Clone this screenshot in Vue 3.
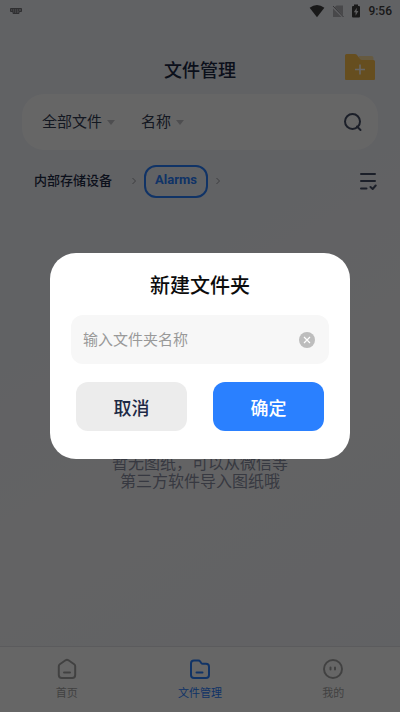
<script setup>
import { ref } from 'vue'

const folderName = ref('')
const tabs = [
  { id: 'home', label: '首页', active: false },
  { id: 'files', label: '文件管理', active: true },
  { id: 'me', label: '我的', active: false }
]
</script>

<template>
  <div class="app">
    <div class="status">
      <svg class="keyboard" width="14" height="8" viewBox="0 0 14 8" fill="none">
        <path d="M1.500 1.500h11v3H10v2H4v-2H1.500z" fill="#aaaab0" stroke="#77777c" />
        <path d="M3 3h8" stroke="#55555a" stroke-dasharray="1 1" />
        <path d="M5 5h4" stroke="#55555a" stroke-dasharray="1 1" />
      </svg>
      <div class="signals">
        <svg width="16" height="14" viewBox="0 0 16 14"><path d="M8 13.200L.6 3.800Q8-1.800 15.400 3.800z" fill="#404040" /></svg>
        <svg width="12" height="14" viewBox="0 0 12 14">
          <path d="M4.500 1.500H11v10L2.600 3.100z" fill="#b4b4b8" />
          <path d="M1 4.500L9.500 13H1z" fill="#b4b4b8" />
          <path d="M1 2L11.500 13" stroke="#858589" />
        </svg>
        <svg width="10" height="14" viewBox="0 0 10 14">
          <path d="M3 .5h4V2h1q1 0 1 1v9.500q0 1-1 1H2q-1 0-1-1V3q0-1 1-1h1z" fill="#404040" />
          <path d="M5.800 3.800L2.800 8.300H4.600V11.700L7.400 7H5.600z" fill="#e8e8ec" />
        </svg>
        <span class="clock">9:56</span>
      </div>
    </div>

    <header class="header">
      <h1>文件管理</h1>
      <button class="add" type="button" aria-label="新建文件夹">
        <svg width="32" height="28" viewBox="0 0 32 28">
          <path d="M15 3h12.500q2 0 2 2v6H12z" fill="#ffe2a0" />
          <path d="M2.500 1H11q1.200 0 2 1l3 4q.8 1 2 1h11.500q1.500 0 1.500 1.500V26q0 1-1 1H2q-1 0-1-1V2.500Q1 1 2.500 1z" fill="#ffc24f" />
          <path d="M16 11.500v10M11 16.500h10" stroke="#fff" stroke-width="1.600" />
        </svg>
      </button>
    </header>

    <section class="filters">
      <button type="button">全部文件<i class="caret"></i></button>
      <button type="button">名称<i class="caret"></i></button>
      <button class="search" type="button" aria-label="搜索">
        <svg width="20" height="20" viewBox="0 0 20 20" fill="none" stroke="#454e66" stroke-width="2">
          <circle cx="9.500" cy="9.500" r="7.500" />
          <path d="M14 14.500L17.500 18" stroke-linecap="round" />
        </svg>
      </button>
    </section>

    <nav class="crumbs" aria-label="路径">
      <a class="root" href="#root">内部存储设备</a>
      <svg class="arrow" width="6" height="8" viewBox="0 0 6 8"><path d="M1.500 1l3 3-3 3" /></svg>
      <a class="current" href="#alarms">Alarms</a>
      <svg class="arrow" width="6" height="8" viewBox="0 0 6 8"><path d="M1.500 1l3 3-3 3" /></svg>
      <button class="select" type="button" aria-label="多选">
        <svg width="18" height="18" viewBox="0 0 18 18" fill="none" stroke="#454e66" stroke-width="2" stroke-linecap="round">
          <path d="M2 2h14M2 9h14M2 16.500h5.500M11.500 15l2.200 2 3-3.500" />
        </svg>
      </button>
    </nav>

    <main class="empty">
      <p>暂无图纸，可以从微信等</p>
      <p>第三方软件导入图纸哦</p>
    </main>

    <nav class="tabs" aria-label="主导航">
      <a v-for="tab in tabs" :key="tab.id" :href="'#' + tab.id" :class="{ active: tab.active }">
        <svg width="22" height="22" viewBox="0 0 22 22" fill="none" stroke="currentColor" stroke-width="2" stroke-linecap="round" stroke-linejoin="round">
          <template v-if="tab.id === 'home'">
            <path d="M3.800 6.300L9.500 2.300q1.500-.9 3 0l5.700 4q1 .8 1 2V17q0 3-3 3H5.800q-3 0-3-3V8.300q0-1.200 1-2z" />
            <path d="M8 14.500h6" />
          </template>
          <template v-else-if="tab.id === 'files'">
            <path d="M5 2.500h4.300q1.200 0 1.900 1l1 1.500q.6.800 1.600.8h3.200q3 0 3 3V17q0 3-3 3H5q-3 0-3-3V5.500q0-3 3-3z" />
            <path d="M7.500 14.500h6" />
          </template>
          <template v-else>
            <circle cx="11" cy="11" r="9" />
            <path d="M8.500 9.500v2M13 9.500v2" />
          </template>
        </svg>
        <span>{{ tab.label }}</span>
      </a>
    </nav>

    <div class="overlay">
      <form class="dialog" role="dialog" aria-modal="true" aria-labelledby="dialog-title" @submit.prevent>
        <h2 id="dialog-title">新建文件夹</h2>
        <div class="field">
          <input v-model="folderName" type="text" placeholder="输入文件夹名称" aria-label="输入文件夹名称" />
          <button class="clear" type="button" aria-label="清空" @click="folderName = ''">
            <svg width="16" height="16" viewBox="0 0 16 16">
              <circle cx="8" cy="8" r="8" fill="#bdbdbd" />
              <path d="M5 5l6 6M11 5l-6 6" stroke="#fff" stroke-width="1.200" />
            </svg>
          </button>
        </div>
        <div class="actions">
          <button class="cancel" type="button">取消</button>
          <button class="confirm" type="submit">确定</button>
        </div>
      </form>
    </div>
  </div>
</template>

<style>
body {
  margin: 0;
}
</style>

<style scoped>
.app {
  display: flex;
  flex-direction: column;
  min-height: 100vh;
  background: linear-gradient(150deg, #f3f5fb, #f2f4fb 35%, #f8f8fa 60%, #f2f4fa);
  color: #1d2945;
  font-family: Roboto, "Noto Sans CJK SC", sans-serif;
}
h1, h2, p {
  margin: 0;
}
button {
  padding: 0;
  border: 0;
  background: none;
  color: inherit;
  font: inherit;
}
a {
  color: inherit;
  text-decoration: none;
}
svg {
  display: block;
}
.status {
  display: flex;
  align-items: center;
  justify-content: space-between;
  height: 22px;
  padding: 0 8px 0 9px;
}
.signals {
  display: flex;
  align-items: center;
  gap: 7px;
}
.clock {
  color: #404040;
  font-size: 12px;
  font-weight: 500;
}
.header {
  display: grid;
  grid-template-columns: 32px 1fr 32px;
  align-items: center;
  height: 46px;
  padding: 26px 24px 0;
}
.header h1 {
  grid-column: 2;
  font-size: 18px;
  font-weight: 500;
  line-height: 24px;
  text-align: center;
}
.add {
  margin-bottom: 8px;
}
.filters {
  display: flex;
  align-items: center;
  gap: 26px;
  height: 56px;
  margin: 0 22px;
  padding: 0 15px 0 20px;
  border-radius: 22px;
  background: #fff;
  color: #333c54;
  font-size: 15px;
  line-height: 20px;
  box-sizing: border-box;
}
.filters button {
  display: flex;
  align-items: center;
  gap: 5px;
}
.caret {
  border: 4px solid transparent;
  border-top: 5px solid #c4c4c8;
  border-bottom: 0;
}
.filters .search {
  margin-left: auto;
}
.crumbs {
  display: flex;
  align-items: center;
  height: 34px;
  margin: 14px 23px 0 22px;
  gap: 7px;
  font-size: 13px;
  font-weight: 500;
}
.root {
  padding: 0 12px 3px;
}
.current {
  padding: 0 9px 3px;
  border: 2px solid #2a80ff;
  border-radius: 12px;
  color: #2a80ff;
  font-weight: 700;
  line-height: 26px;
}
.arrow {
  fill: none;
  stroke: #9a9aa0;
}
.select {
  margin-left: auto;
}
.empty {
  flex: 1;
  padding-top: 257px;
  color: #8b8fa2;
  font-size: 16px;
  line-height: 18px;
  text-align: center;
}
.tabs {
  display: flex;
  height: 66px;
  border-top: 1px solid #e4e4e8;
  background: #fff;
  box-sizing: border-box;
}
.tabs a {
  display: flex;
  flex: 1;
  flex-direction: column;
  align-items: center;
  gap: 6px;
  padding-top: 11px;
  color: #a4a4a4;
  font-size: 11px;
  line-height: 16px;
}
.tabs .active {
  color: #2a80ff;
}
.overlay {
  position: fixed;
  inset: 0;
  display: flex;
  align-items: center;
  justify-content: center;
  background: rgba(0, 0, 0, 0.6);
}
.dialog {
  width: 75%;
  padding: 19px 21px 28px;
  border-radius: 26px;
  background: #fff;
  box-sizing: border-box;
}
.dialog h2 {
  color: #0c0c0c;
  font-size: 20px;
  font-weight: 500;
  line-height: 28px;
  text-align: center;
}
.field {
  display: flex;
  align-items: center;
  height: 49px;
  margin-top: 15px;
  padding: 0 14px 0 12px;
  border-radius: 12px;
  background: #f7f7f7;
}
.field input {
  flex: 1;
  min-width: 0;
  padding: 0;
  border: 0;
  outline: 0;
  background: none;
  color: #1d2945;
  font: inherit;
  font-size: 15px;
}
.field input::placeholder {
  color: #999;
  opacity: 1;
}
.actions {
  display: flex;
  gap: 26px;
  margin-top: 18px;
  padding: 0 5px;
}
.actions button {
  flex: 1;
  height: 49px;
  border-radius: 12px;
  font-size: 18px;
  font-weight: 500;
}
.cancel {
  background: #ececec;
}
.actions .confirm {
  background: #2a80ff;
  color: #fff;
}
</style>
